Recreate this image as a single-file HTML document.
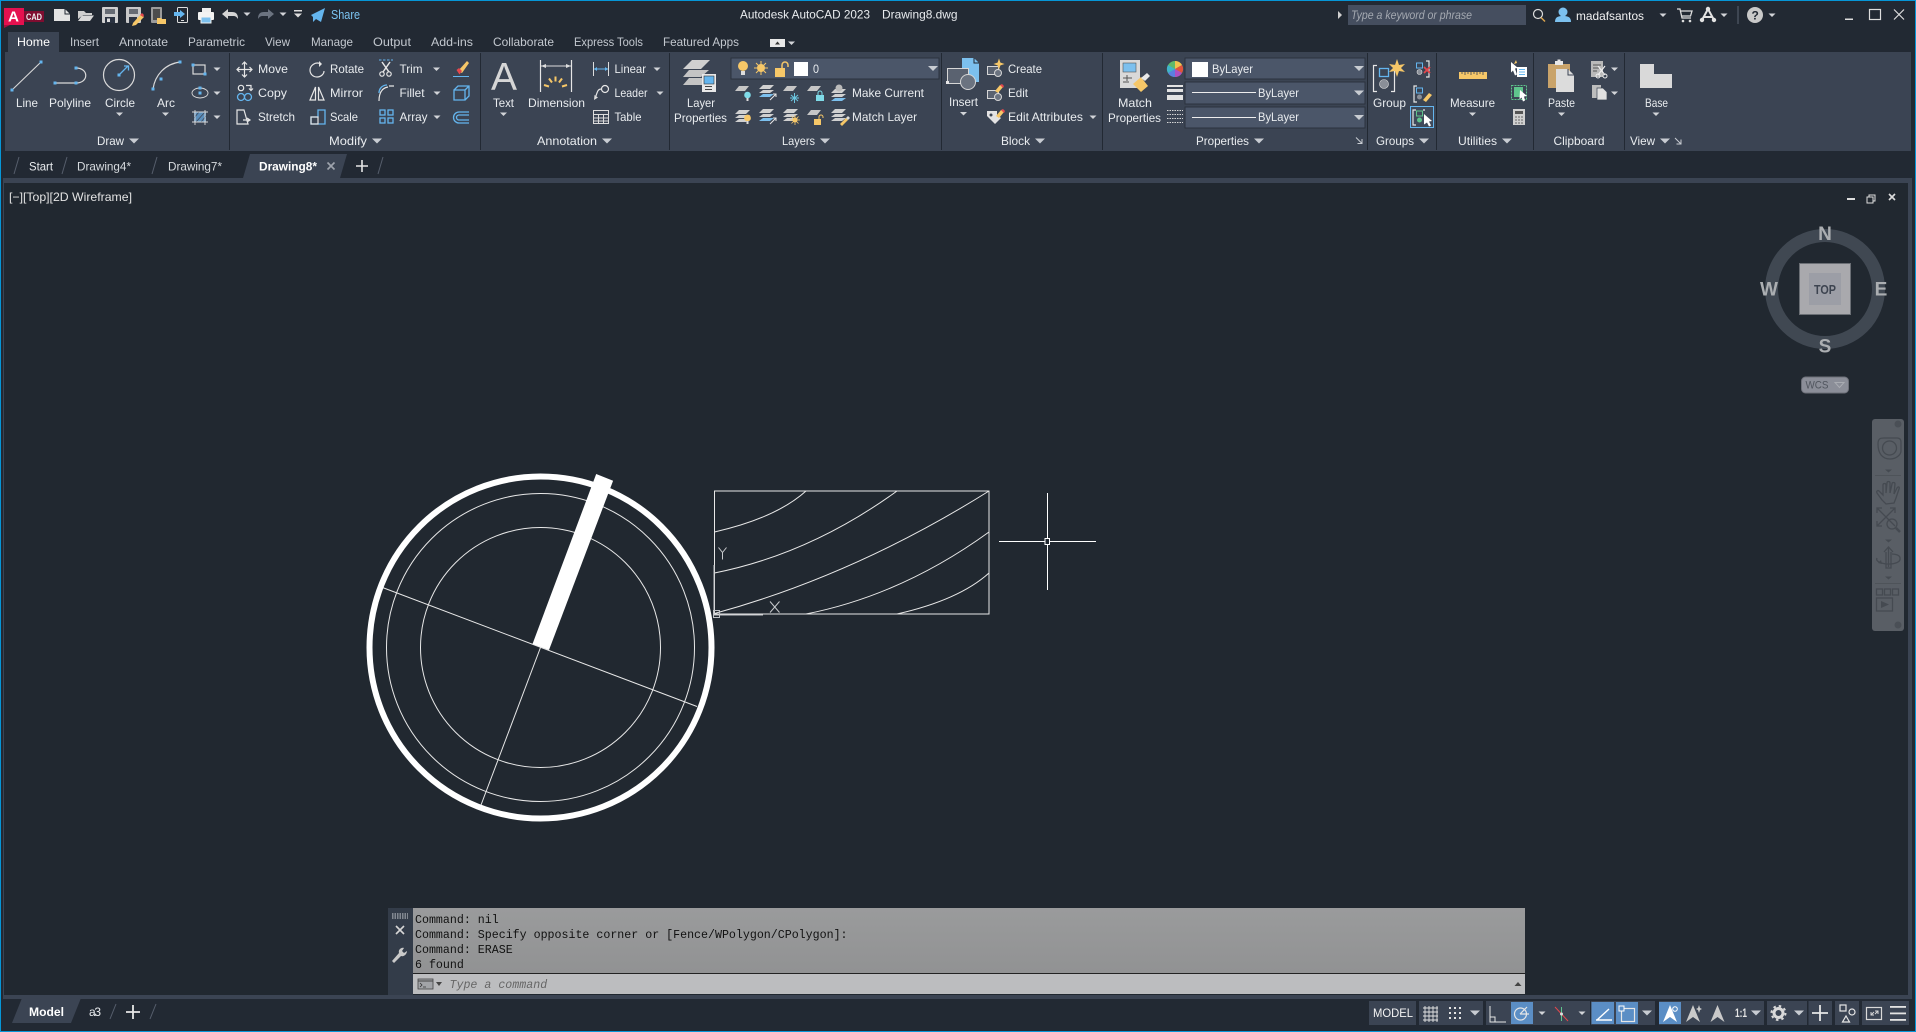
<!DOCTYPE html>
<html><head><meta charset="utf-8"><title>Autodesk AutoCAD 2023</title>
<style>
html,body{margin:0;padding:0;background:#222933;overflow:hidden}
svg{display:block;position:absolute;left:0;top:0}
text{font-family:"Liberation Sans",sans-serif;font-size:12px;fill:#e9ecef;white-space:pre}
.m{font-family:"Liberation Mono",monospace;font-size:11.63px;fill:#111}
.d{fill:#c3c8cf}
.b{font-weight:bold;fill:#fff}
.s{fill:none;stroke:#d9d9d9;stroke-width:1.2}
.w{fill:none;stroke:#e6e6e6;stroke-width:1.2}
.bl{fill:none;stroke:#64b5ee;stroke-width:1.3}
.g{fill:#d9d9d9}.y{fill:#f6c768}.c{fill:#64b5ee}
.nv{fill:none;stroke:#454a51;stroke-width:1.3}
</style></head><body>
<svg width="1916" height="1032" viewBox="0 0 1916 1032" xmlns="http://www.w3.org/2000/svg">
<defs>
<path id="k" d="M-3.5-1.5h7L0 2z" fill="#d2d4d8"/>
<path id="K" d="M-5-2.5H5L0 2.5z" fill="#c8ccd2"/>
<rect id="p" x="-1.5" y="-1.5" width="3" height="3" fill="#64b5ee"/>
<path id="lp" d="M0 5l4-5h10l-4 5z" fill="#c6c6c6"/>
<g id="st"><path d="M0 4l4-4h11l-4 4z" fill="#d0d0d0"/><path d="M0 8l4-3h11l-4 3z" fill="#d0d0d0"/><path d="M0 12l4-3h11l-4 3z" fill="#d0d0d0"/></g>
<g id="bst"><path d="M0 4l4-4h11l-4 4z" fill="#d0d0d0"/><path d="M0 8l4-3h11l-4 3z" fill="#d0d0d0"/><path d="M0 12l4-3h11l-4 3z" fill="#7cc0ee"/></g>
</defs>
<rect width="1916" height="1032" fill="#222933"/>
<rect width="1916" height="1" fill="#0696d7"/><rect y="1031" width="1916" height="1" fill="#0696d7"/>
<rect width="1" height="1032" fill="#0696d7"/><rect x="1915" width="1" height="1032" fill="#0696d7"/>

<!-- ribbon & viewport frames -->
<rect x="5" y="52" width="1906" height="99" fill="#3b4453"/>
<rect x="8" y="32" width="51" height="20" fill="#3b4453"/>
<rect x="3" y="178" width="1909" height="5" fill="#3b4453"/>
<rect x="1908" y="178" width="4" height="821" fill="#3b4453"/>
<rect x="3" y="178" width="1" height="821" fill="#3b4453"/>
<rect x="3" y="995" width="1909" height="4" fill="#3b4453"/>
<rect x="4" y="183" width="1904" height="812" fill="#212830"/>
<g fill="#222933"><rect x="229" y="53" width="1" height="97"/><rect x="480" y="53" width="1" height="97"/><rect x="669" y="53" width="1" height="97"/><rect x="941" y="53" width="1" height="97"/><rect x="1102" y="53" width="1" height="97"/><rect x="1367" y="53" width="1" height="97"/><rect x="1436" y="53" width="1" height="97"/><rect x="1533" y="53" width="1" height="97"/><rect x="1624" y="53" width="1" height="97"/></g>

<!-- quick access -->
<rect x="4" y="8" width="20" height="17" fill="#e5114f"/><path d="M4 25v3l6-3z" fill="#a80f3c"/>
<rect x="24" y="11" width="20" height="11" fill="#7f0d30"/>
<text x="8" y="21.5" textLength="11" lengthAdjust="spacingAndGlyphs" style="font-size:15px;font-weight:bold;fill:#fff">A</text>
<text x="26" y="20" textLength="16" lengthAdjust="spacingAndGlyphs" style="font-size:9px;font-weight:bold;fill:#eee">CAD</text>
<path d="M54 9h11l5 5v7H54z" fill="#e3e3e3"/><path d="M65 9v5h5" fill="none" stroke="#222933"/>
<path d="M78 19V11h6l2 2h6v2H83z" fill="#cfcfcf"/><path d="M82 15.5h12l-4 5.5H78z" fill="#d9d9d9"/>
<rect x="102" y="7" width="16" height="16" rx="1" fill="#cfcfcf"/><rect x="105" y="9" width="10" height="5" fill="#666b73"/><rect x="105" y="17" width="10" height="6" fill="#2a3240"/><rect x="107" y="18.500" width="3" height="3.500" fill="#ddd"/>
<rect x="126" y="7" width="15" height="16" rx="1" fill="#c8c8c8"/><rect x="129" y="9" width="9" height="5" fill="#666b73"/><rect x="129" y="17" width="8" height="6" fill="#2a3240"/><path d="M133 23l8-9 3 3-8 8-4 1z" fill="#f6c768"/><path d="M140 15l2-2 2 2-1 2z" fill="#e5484d"/>
<rect x="151" y="7" width="11" height="16" rx="1" fill="#9b9b9b"/><rect x="153" y="9" width="7" height="11" fill="#4c4c4c"/><path d="M157 18h4l1 1h4v5h-9z" fill="#f6c768"/>
<rect x="177.500" y="7.500" width="10" height="15" rx="1" fill="none" stroke="#ddd"/><path d="M174 12h6v-2l5 4-5 4v-2h-6z" fill="#64b5ee"/><rect x="181" y="20" width="3" height="1" fill="#ddd"/>
<rect x="202" y="8" width="9" height="5" fill="#eee"/><rect x="198" y="12" width="16" height="8" rx="1" fill="#f2f2f2"/><rect x="201" y="17" width="10" height="6" fill="#7cc0ee" stroke="#f2f2f2"/>
<path d="M222 14l6-5v3h4c4 0 6 2 6 7-2-3-3-3-6-3h-4v3z" fill="#d5d5d5"/><use href="#k" x="247" y="14"/>
<path d="M274 14l-6-5v3h-4c-4 0-6 2-6 7 2-3 3-3 6-3h4v3z" fill="#6b7380"/><use href="#k" x="283" y="14"/>
<rect x="294" y="10" width="8" height="1.500" fill="#ddd"/><path d="M294 13.500h8l-4 4z" fill="#ddd"/>
<path d="M311 15l14-7-4 14-5-3-3 3v-5z" fill="#64b5ee"/>
<text x="331" y="19" textLength="29" lengthAdjust="spacingAndGlyphs" style="fill:#7cc4f2;font-size:13px">Share</text>

<!-- title -->
<text x="740" y="18.500" textLength="130" lengthAdjust="spacingAndGlyphs">Autodesk AutoCAD 2023</text>
<text x="882" y="18.500" textLength="75.500" lengthAdjust="spacingAndGlyphs">Drawing8.dwg</text>
<path d="M1338 11l4 4-4 4z" fill="#cfcfcf"/>
<rect x="1348" y="5" width="178" height="20" fill="#454e5f"/>
<text x="1351" y="19" textLength="121" lengthAdjust="spacingAndGlyphs" style="font-style:italic;font-size:11.500px;fill:#a4a9b1">Type a keyword or phrase</text>
<circle cx="1538" cy="14" r="4.500" fill="none" stroke="#ddd" stroke-width="1.200"/><path d="M1541 17.500l4 4" stroke="#d9a34e" stroke-width="1.500"/>
<circle cx="1563" cy="12" r="4.500" fill="#7cc0ee"/><path d="M1555 22c0-5 3-6 8-6s8 1 8 6z" fill="#7cc0ee"/>
<text x="1576" y="20" textLength="68" lengthAdjust="spacingAndGlyphs" style="fill:#f2f2f2">madafsantos</text>
<use href="#k" x="1663" y="15"/>
<path d="M1677 9h3l2 9h9M1681 11h11l-1.500 5h-8.500" fill="none" stroke="#ddd" stroke-width="1.300"/><circle cx="1683" cy="21" r="1.300" fill="#ddd"/><circle cx="1690" cy="21" r="1.300" fill="#ddd"/>
<path d="M1708 9l-6 11M1708 9l6 11M1704 17h8" stroke="#e3e3e3" stroke-width="2" fill="none"/><circle cx="1708" cy="9" r="2.200" fill="#e3e3e3"/><circle cx="1702" cy="20" r="2.200" fill="#e3e3e3"/><circle cx="1714" cy="20" r="2.200" fill="#e3e3e3"/>
<use href="#k" x="1724" y="15"/>
<rect x="1737.500" y="6" width="1" height="18" fill="#5a6270"/>
<circle cx="1755" cy="15" r="8" fill="#c9c9c9"/><text x="1751.500" y="19.500" style="font-size:12px;font-weight:bold;fill:#222933">?</text>
<use href="#k" x="1772" y="15"/>
<rect x="1845" y="18.500" width="8" height="1.500" fill="#ddd"/>
<rect x="1869.500" y="9.500" width="11" height="10" fill="none" stroke="#ddd" stroke-width="1.200"/>
<path d="M1894 9.500l10 10M1904 9.500l-10 10" stroke="#ddd" stroke-width="1.200"/>

<!-- ribbon tabs -->
<g>
<text x="17" y="46" textLength="33" lengthAdjust="spacingAndGlyphs" style="fill:#fff">Home</text>
<g style="fill:#bdc2c9">
<text class="d" x="70" y="46" textLength="29" lengthAdjust="spacingAndGlyphs">Insert</text>
<text class="d" x="119" y="46" textLength="49" lengthAdjust="spacingAndGlyphs">Annotate</text>
<text class="d" x="188" y="46" textLength="57" lengthAdjust="spacingAndGlyphs">Parametric</text>
<text class="d" x="265" y="46" textLength="25" lengthAdjust="spacingAndGlyphs">View</text>
<text class="d" x="311" y="46" textLength="42" lengthAdjust="spacingAndGlyphs">Manage</text>
<text class="d" x="373" y="46" textLength="38" lengthAdjust="spacingAndGlyphs">Output</text>
<text class="d" x="431" y="46" textLength="42" lengthAdjust="spacingAndGlyphs">Add-ins</text>
<text class="d" x="493" y="46" textLength="61" lengthAdjust="spacingAndGlyphs">Collaborate</text>
<text class="d" x="574" y="46" textLength="69" lengthAdjust="spacingAndGlyphs">Express Tools</text>
<text class="d" x="663" y="46" textLength="76" lengthAdjust="spacingAndGlyphs">Featured Apps</text>
</g>
<rect x="770" y="39" width="15" height="8" fill="#e8e8e8"/><path d="M775 44.500h5l-2.500-3z" fill="#333"/><use href="#k" x="791.500" y="43"/>
</g>

<!-- Draw -->
<path d="M12 90L41 62" stroke="#d9d9d9" stroke-width="1.100"/><use href="#p" x="12" y="90"/><use href="#p" x="41" y="62"/>
<path d="M55 83h21c13 0 13-15 0-15" class="s"/><use href="#p" x="55" y="83"/><use href="#p" x="76" y="83"/><use href="#p" x="76" y="68"/>
<circle cx="119" cy="75" r="15.500" class="s"/><path d="M119 75l9-9M124 66h4.500v4.500" class="bl"/><use href="#p" x="119" y="75"/>
<path d="M153 89C155 75 165 64 180 62" class="s"/><use href="#p" x="153" y="89"/><use href="#p" x="161" y="79"/><use href="#p" x="180" y="62"/>
<text x="16" y="107" textLength="22" lengthAdjust="spacingAndGlyphs">Line</text>
<text x="49" y="107" textLength="42" lengthAdjust="spacingAndGlyphs">Polyline</text>
<text x="105" y="107" textLength="30" lengthAdjust="spacingAndGlyphs">Circle</text>
<text x="157" y="107" textLength="18" lengthAdjust="spacingAndGlyphs">Arc</text>
<use href="#k" x="119.500" y="114"/><use href="#k" x="165.500" y="114"/>
<rect x="193" y="65" width="12" height="9" class="s" stroke-width="1"/><use href="#p" x="193" y="65"/><use href="#p" x="205" y="74"/><use href="#k" x="217" y="69"/>
<ellipse cx="200" cy="93" rx="8" ry="5" fill="none" stroke="#d9d9d9" stroke-width=".9"/><use href="#p" x="200" y="93"/><use href="#p" x="200" y="88"/><use href="#k" x="217" y="93"/>
<rect x="194" y="112" width="12" height="10" fill="#5c8fbc"/><path d="M194 118l5-6M196 122l9-10M201 122l5-6" stroke="#3b4453" stroke-width=".7"/><path d="M192 112h16M192 122h16M195 110v15M205 110v15" fill="none" stroke="#d9d9d9" stroke-width=".9"/><use href="#k" x="217" y="117"/>
<text x="97" y="145" textLength="27" lengthAdjust="spacingAndGlyphs">Draw</text><use href="#K" x="134" y="141"/>

<!-- Modify -->
<path d="M244.500 62v15M237 69.500h15M242 64.500l2.500-2.500 2.500 2.500M242 74.500l2.500 2.500 2.500-2.500M239.500 67l-2.500 2.500 2.500 2.500M249.500 67l2.500 2.500-2.500 2.500" class="w" stroke-width="1.500"/>
<circle cx="241" cy="88" r="2.700" class="w"/><path d="M246 85.500h5v4M249 88.500l2 2 2-2" class="w"/><circle cx="241" cy="97" r="3.500" class="bl"/><circle cx="248" cy="97" r="3.500" class="bl"/>
<path d="M237 110h7l4 14h-11z" class="w"/><path d="M243 120h6M247 118l3 2-3 2" class="w"/>
<path d="M321 64c-6-3-11 2-11 6 0 4 3 7 7 7s7-3 7-6" class="w"/><path d="M319 61l3 3-3 3z" fill="#e6e6e6"/>
<path d="M310 100l5.500-13v13zM324 100l-5.500-13v13z" class="w" fill="none"/>
<path d="M318 110h7v14h-14v-7h7z" class="bl" fill="none"/><rect x="311" y="117" width="7" height="7" class="w"/>
<path d="M379 60h14" stroke="#64b5ee" stroke-dasharray="2.500 1.500"/><path d="M382 62l7 10M390 62l-7 10" stroke="#e6e6e6" stroke-width="1.500"/><circle cx="382" cy="74" r="2.200" class="w"/><circle cx="389" cy="74" r="2.200" class="w"/>
<path d="M379 101c0-8 3-13 9-14M389 86h5" class="w"/><path d="M379 93c0-4 3-8 8-8" class="bl" stroke="#64b5ee"/>
<g class="bl"><rect x="380" y="110" width="5" height="5"/><rect x="388" y="110" width="5" height="5"/><rect x="380" y="118" width="5" height="5"/><rect x="388" y="118" width="5" height="5"/></g>
<path d="M458 71l9-10 2 2-7 10z" fill="#f6c768"/><path d="M456.500 70l2.500-2 3 3-2.500 3.500z" fill="#e5484d"/><path d="M453 76.500h16" stroke="#64b5ee"/>
<path d="M454 90h11v10h-11zM454 90l4-4h11v10l-4 4M465 90l4-4" class="bl"/>
<path d="M469 112h-10a5 5 0 0 0 0 11h10M469 115h-10a2.500 2.500 0 0 0 0 5h10" class="bl"/>
<text x="258" y="73" textLength="30" lengthAdjust="spacingAndGlyphs">Move</text>
<text x="258" y="97" textLength="29" lengthAdjust="spacingAndGlyphs">Copy</text>
<text x="258" y="121" textLength="37" lengthAdjust="spacingAndGlyphs">Stretch</text>
<text x="330" y="73" textLength="34" lengthAdjust="spacingAndGlyphs">Rotate</text>
<text x="330" y="97" textLength="33" lengthAdjust="spacingAndGlyphs">Mirror</text>
<text x="330" y="121" textLength="28" lengthAdjust="spacingAndGlyphs">Scale</text>
<text x="399.500" y="73" textLength="23" lengthAdjust="spacingAndGlyphs">Trim</text>
<text x="399.500" y="97" textLength="25" lengthAdjust="spacingAndGlyphs">Fillet</text>
<text x="399.500" y="121" textLength="28" lengthAdjust="spacingAndGlyphs">Array</text>
<use href="#k" x="436.500" y="69"/><use href="#k" x="437" y="93"/><use href="#k" x="437" y="117"/>
<text x="329" y="145" textLength="38" lengthAdjust="spacingAndGlyphs">Modify</text><use href="#K" x="377" y="141"/>

<!-- Annotation -->
<text x="491" y="90" style="font-size:39px;fill:#d6d6d6">A</text>
<text x="493" y="107" textLength="21" lengthAdjust="spacingAndGlyphs">Text</text><use href="#k" x="503.500" y="114"/>
<path d="M540.500 60v32M571.500 60v32" class="w" stroke="#ddd"/><path d="M541 66h30" stroke="#ddd"/><path d="M541 66l5-2v4zM571 66l-5-2v4z" fill="#ddd"/>
<path d="M555.500 76.500v5M549 78.500l3 4M562 78.500l-3 4M544 85l5 1.500M567 85l-5 1.500" stroke="#f6c768" stroke-width="2"/>
<text x="528" y="107" textLength="57" lengthAdjust="spacingAndGlyphs">Dimension</text>
<path d="M593.500 62v14M608.500 62v14" stroke="#ddd"/><path d="M594 69h14" stroke="#64b5ee"/><path d="M594 69l3-2v4zM608 69l-3-2v4z" fill="#64b5ee"/>
<circle cx="605" cy="89" r="3.500" class="w"/><path d="M601.500 89c-4 0-4 3-6 8" class="w"/><path d="M594 100l.5-5 3.500 2.500z" fill="#ddd"/>
<g fill="none" stroke="#ddd"><rect x="593.500" y="110.500" width="15" height="13"/><path d="M593 114.500h16M593 118h16M593 121h16M598.500 114v10M603.500 114v10"/></g>
<text x="614.500" y="73" textLength="31.500" lengthAdjust="spacingAndGlyphs">Linear</text>
<text x="614.500" y="97" textLength="33" lengthAdjust="spacingAndGlyphs">Leader</text>
<text x="614.500" y="121" textLength="27" lengthAdjust="spacingAndGlyphs">Table</text>
<use href="#k" x="657" y="69"/><use href="#k" x="660" y="93"/>
<text x="537" y="145" textLength="60" lengthAdjust="spacingAndGlyphs">Annotation</text><use href="#K" x="607" y="141"/>

<!-- Layers -->
<g transform="translate(683,60)"><path d="M0 9l9-9h18l-9 9z" fill="#d0d0d0"/><path d="M0 17l6-7h20l-8 7z" fill="#c4c4c4"/><path d="M0 25l6-7h16v7z" fill="#c4c4c4"/></g>
<rect x="702" y="74" width="14" height="18" fill="#e8e8e8"/><rect x="704" y="76" width="10" height="8" fill="#64b5ee" stroke="#333" stroke-width=".6"/><path d="M705 86.500h7M705 89.500h7" stroke="#444"/>
<text x="687" y="107" textLength="28" lengthAdjust="spacingAndGlyphs">Layer</text>
<text x="674" y="122" textLength="53" lengthAdjust="spacingAndGlyphs">Properties</text>
<rect x="731" y="58" width="208" height="21" fill="#4b5669" stroke="#2b323e"/>
<circle cx="743" cy="66" r="5" class="y"/><rect x="741" y="71" width="4" height="4" fill="#ddd"/>
<circle cx="761" cy="68" r="4" class="y"/><path d="M761 61v14M754 68h14M756 63l10 10M766 63l-10 10" stroke="#f6c768"/>
<rect x="775" y="68" width="10" height="9" class="y"/><path d="M782 68v-3a3 3 0 0 1 6 0v2" fill="none" stroke="#f6c768" stroke-width="1.500"/>
<rect x="794" y="62" width="14" height="14" fill="#fff"/>
<text x="813" y="73" textLength="6" lengthAdjust="spacingAndGlyphs">0</text>
<use href="#K" x="933" y="68.500"/>
<use href="#lp" x="735" y="86"/><circle cx="747.500" cy="95" r="3.300" fill="#7fdbe8"/><rect x="746.500" y="98" width="2" height="3" fill="#ddd"/>
<use href="#bst" x="759" y="85"/><path d="M770 100l6-6M773 94h3v3" stroke="#e6e6e6" fill="none"/>
<use href="#lp" x="783" y="86"/><path d="M794.500 93v10M790 98h9M791 95l7 6M798 95l-7 6" stroke="#6cc6e0"/>
<use href="#lp" x="807" y="86"/><rect x="816" y="95" width="8" height="6" fill="#7fdbe8"/><path d="M818 95v-2a2 2 0 0 1 4 0v2" fill="none" stroke="#7fdbe8"/>
<use href="#bst" x="831" y="89"/><circle cx="839" cy="88" r="3.500" fill="#bbb"/>
<use href="#st" x="735" y="110"/><circle cx="747.500" cy="118" r="3.400" class="y"/><rect x="746.500" y="121" width="2" height="3" fill="#ddd"/>
<use href="#bst" x="759" y="109"/><path d="M770 124l6-6M773 118h3v3" stroke="#e6e6e6" fill="none"/>
<use href="#st" x="783" y="109"/><circle cx="795" cy="120" r="2.500" class="y"/><path d="M795 115v10M790 120h10M791.500 116.500l7 7M798.500 116.500l-7 7" stroke="#f6c768" stroke-width=".8"/>
<use href="#lp" x="807" y="110"/><rect x="814" y="119" width="7" height="6" class="y"/><path d="M819 119v-2a2 2 0 0 1 4 0v1" fill="none" stroke="#f6c768"/>
<use href="#st" x="831" y="109"/><path d="M840 124l6-6 2 2-6 6z" class="y"/><path d="M846 118l2-2 2 2-2 2z" fill="#ddd"/>
<text x="852" y="97" textLength="72" lengthAdjust="spacingAndGlyphs">Make Current</text>
<text x="852" y="121" textLength="65" lengthAdjust="spacingAndGlyphs">Match Layer</text>
<text x="782" y="145" textLength="33" lengthAdjust="spacingAndGlyphs">Layers</text><use href="#K" x="825" y="141"/>

<!-- Block -->
<path d="M962 58h12l5 5v19h-17z" fill="#7cc0ee"/><path d="M974 58v5h5" fill="none" stroke="#222933"/>
<rect x="947.500" y="68.500" width="21" height="15" fill="#5a6270" stroke="#d6d6d6"/><rect x="946" y="81" width="3" height="3" fill="#e6e6e6"/>
<circle cx="968" cy="82" r="7.500" fill="#6b7380" stroke="#d6d6d6"/>
<text x="949" y="106" textLength="29" lengthAdjust="spacingAndGlyphs">Insert</text><use href="#k" x="963.500" y="113.500"/>
<rect x="987.500" y="66.500" width="11" height="8" fill="#5a6270" stroke="#d6d6d6"/><circle cx="998" cy="73" r="3.500" fill="#6b7380" stroke="#d6d6d6"/><path d="M999 60l1 3 3 1-3 1-1 3-1-3-3-1 3-1z" class="y" stroke="#f6c768"/>
<rect x="987.500" y="90.500" width="11" height="8" fill="#5a6270" stroke="#d6d6d6"/><circle cx="998" cy="97" r="3.500" fill="#6b7380" stroke="#d6d6d6"/><path d="M995 91l5-6 3 2-5 6z" class="y"/><path d="M1000 85l2-1 2 2-1 2z" fill="#e5484d"/>
<path d="M987 111h10v4l4 3-6 6-8-8z" fill="#e3e3e3"/><circle cx="991" cy="115" r="1.500" fill="#3b4453"/><path d="M996 116l5-6 3 2-5 6z" class="y"/><path d="M1001 110l2-1 2 2-1 2z" fill="#e5484d"/>
<text x="1008" y="73" textLength="34" lengthAdjust="spacingAndGlyphs">Create</text>
<text x="1008" y="97" textLength="20" lengthAdjust="spacingAndGlyphs">Edit</text>
<text x="1008" y="121" textLength="75" lengthAdjust="spacingAndGlyphs">Edit Attributes</text><use href="#k" x="1093" y="117"/>
<text x="1001" y="145" textLength="29" lengthAdjust="spacingAndGlyphs">Block</text><use href="#K" x="1040" y="141"/>

<!-- Properties -->
<rect x="1120" y="60" width="20" height="28" fill="#d9d9d9"/><rect x="1123" y="63" width="13" height="9" fill="#7cc0ee" stroke="#555" stroke-width=".6"/><path d="M1123 78h9M1123 82h6M1127 75v6" stroke="#555"/>
<path d="M1133 84l8-7 7 9-7 6z" class="y"/><path d="M1141 78l6-5 3 3-5 5z" fill="#e8e8e8"/>
<text x="1118" y="107" textLength="34" lengthAdjust="spacingAndGlyphs">Match</text>
<text x="1108" y="122" textLength="53" lengthAdjust="spacingAndGlyphs">Properties</text>
<circle cx="1175" cy="69" r="8" fill="#5fb96a"/><path d="M1175 69V61a8 8 0 0 1 7 4z" fill="#f2c14e"/><path d="M1175 69l7-4a8 8 0 0 1 0 8z" fill="#e0533d"/><path d="M1175 69l7 4a8 8 0 0 1-7 4z" fill="#b04fc2"/><path d="M1175 69v8a8 8 0 0 1-7-4z" fill="#5b7fe0"/><path d="M1175 69l-7 4a8 8 0 0 1 0-8z" fill="#3fb4c9"/>
<g fill="#e3e3e3"><rect x="1167" y="85" width="16" height="2"/><rect x="1167" y="89" width="16" height="3"/><rect x="1167" y="95" width="16" height="5"/></g>
<path d="M1167 110.500h16M1167 114.500h16M1167 118.500h16M1167 122.500h16" stroke="#d6d6d6" stroke-dasharray="1.500 1"/>
<g fill="#4b5669" stroke="#2b323e"><rect x="1185" y="58" width="180" height="21"/><rect x="1185" y="82" width="180" height="22"/><rect x="1185" y="107" width="180" height="21"/></g>
<rect x="1192" y="62" width="16" height="15" fill="#fff"/>
<text x="1212" y="73" textLength="41" lengthAdjust="spacingAndGlyphs">ByLayer</text>
<path d="M1192 92.500h64M1192 117.500h64" stroke="#eee"/>
<text x="1258" y="97" textLength="41" lengthAdjust="spacingAndGlyphs">ByLayer</text>
<text x="1258" y="121" textLength="41" lengthAdjust="spacingAndGlyphs">ByLayer</text>
<use href="#K" x="1359" y="68.500"/><use href="#K" x="1359" y="93"/><use href="#K" x="1359" y="117.500"/>
<text x="1196" y="145" textLength="53" lengthAdjust="spacingAndGlyphs">Properties</text><use href="#K" x="1259" y="141"/>
<path d="M1356 137.500l6 6M1362 139v4.500h-4.500" stroke="#c8ccd2" fill="none"/>

<!-- Groups -->
<path d="M1377 65.500h-3.500v26h3.500M1391 65.500h3.500v26H1391" class="w"/>
<rect x="1379.500" y="68.500" width="9" height="8" fill="none" stroke="#64b5ee" stroke-width="1.300"/><circle cx="1384" cy="84" r="4.500" fill="#8a8f98" stroke="#ddd" stroke-width=".6"/>
<path d="M1397 59l2 6 6-1-4 4 4 4-6-1-2 6-2-6-6 1 4-4-4-4 6 1z" class="y"/>
<text x="1373" y="107" textLength="33" lengthAdjust="spacingAndGlyphs">Group</text>
<rect x="1416.500" y="63" width="6" height="5" fill="none" stroke="#64b5ee"/><circle cx="1419.500" cy="72" r="2.500" fill="#8a8f98" stroke="#ddd" stroke-width=".6"/><path d="M1426 61h3v16h-3" class="w" stroke-width="1"/><path d="M1424 67l6 6M1430 67l-6 6" stroke="#e5484d" stroke-width="1.800"/>
<path d="M1417 86h-3v16h3" class="w" stroke-width="1"/><rect x="1416.500" y="88" width="6" height="5" fill="none" stroke="#64b5ee"/><circle cx="1419.500" cy="97" r="2.500" fill="#8a8f98"/><path d="M1423 100l6-7 3 2-6 7z" class="y"/>
<rect x="1410.500" y="106.500" width="23" height="21" fill="#3f4a5b" stroke="#64b5ee"/>
<path d="M1416 110h-3v15h3M1423 110h2" class="w" stroke-width="1"/><rect x="1416.500" y="111" width="6" height="5" fill="none" stroke="#5fc48c"/><circle cx="1419.500" cy="120" r="2.500" fill="#5fc48c"/>
<path d="M1424 114l8 7-3 .5 2 4-2 1-2-4-3 2z" fill="#fff"/>
<text x="1376" y="145" textLength="38" lengthAdjust="spacingAndGlyphs">Groups</text><use href="#K" x="1424" y="141"/>

<!-- Utilities -->
<rect x="1459" y="72" width="28" height="7" class="y"/><path d="M1462 72v2M1465 72v3M1468 72v2M1471 72v3M1474 72v2M1477 72v3M1480 72v2M1483 72v3" stroke="#3b4453" stroke-width=".8"/>
<text x="1450" y="107" textLength="45" lengthAdjust="spacingAndGlyphs">Measure</text><use href="#k" x="1472.500" y="114"/>
<path d="M1511 62l7 6-3 .5 2 6-2 1-2-5-2 2z" fill="#fff"/><rect x="1517" y="67" width="10" height="10" fill="#fff"/><path d="M1519 69.500h6M1519 72h6M1519 74.500h6" stroke="#64b5ee"/><path d="M1516 60l-2 4 3-1z" class="y"/>
<rect x="1511.500" y="85.500" width="15" height="14" fill="none" stroke="#5fc48c" stroke-dasharray="2 1"/><rect x="1514" y="87" width="9" height="10" fill="#5fc48c"/><path d="M1520 90l7 6-3 .5 1 4-2 1-1.500-4-2 2z" fill="#fff"/>
<rect x="1513" y="109" width="12" height="16" fill="#d0d0d0"/><rect x="1515" y="111" width="8" height="3" fill="#555"/><path d="M1515 117h8M1515 120h8M1515 123h8" stroke="#666" stroke-dasharray="2 1"/>
<text x="1458" y="145" textLength="39" lengthAdjust="spacingAndGlyphs">Utilities</text><use href="#K" x="1507" y="141"/>

<!-- Clipboard -->
<rect x="1548" y="64" width="22" height="24" fill="#c9a36a"/><rect x="1555" y="61" width="8" height="4" fill="#e8e8e8"/><rect x="1557.500" y="59.500" width="3" height="3" fill="#e8e8e8"/>
<path d="M1556 69h12l6 6v17h-18z" fill="#dcdcdc"/><path d="M1568 69v6h6" fill="none" stroke="#3b4453"/>
<text x="1548" y="107" textLength="27" lengthAdjust="spacingAndGlyphs">Paste</text><use href="#k" x="1561.500" y="114"/>
<rect x="1591" y="61" width="12" height="16" fill="#b9b9b9"/><path d="M1593 65h8M1593 68h6M1593 71h4" stroke="#555"/><path d="M1598 66l7 9M1605 66l-7 9" stroke="#eee" stroke-width="1.200"/><circle cx="1598" cy="76" r="2" fill="none" stroke="#eee"/><circle cx="1605" cy="76" r="2" fill="none" stroke="#eee"/>
<rect x="1592" y="85" width="9" height="13" fill="#bdbdbd"/><path d="M1597 88h6l4 4v8h-10z" fill="#e0e0e0" stroke="#3b4453" stroke-width=".7"/>
<use href="#k" x="1614.500" y="69"/><use href="#k" x="1614.500" y="93"/>
<text x="1553.500" y="145" textLength="51" lengthAdjust="spacingAndGlyphs">Clipboard</text>

<!-- View -->
<path d="M1640 64h14v10h18v14h-32z" fill="#d9d9d9"/>
<text x="1645" y="107" textLength="23" lengthAdjust="spacingAndGlyphs">Base</text><use href="#k" x="1656" y="114"/>
<text x="1630" y="145" textLength="25" lengthAdjust="spacingAndGlyphs">View</text><use href="#K" x="1665" y="141"/>
<path d="M1675 138l6 6M1681 139.500v4.500h-4.500" stroke="#c8ccd2" fill="none"/>

<!-- file tabs -->
<path d="M243 178l7-24h97l-7 24z" fill="#3b4453"/>
<path d="M14 174l5-17M62 174l5-17M152 174l5-17M378 174l5-17" stroke="#565e6c"/>
<text x="29" y="170.500" textLength="24" lengthAdjust="spacingAndGlyphs">Start</text>
<text x="77" y="170.500" textLength="54" lengthAdjust="spacingAndGlyphs" style="fill:#d6dade">Drawing4*</text>
<text x="168" y="170.500" textLength="54" lengthAdjust="spacingAndGlyphs" style="fill:#d6dade">Drawing7*</text>
<text class="b" x="259" y="170.500" textLength="58" lengthAdjust="spacingAndGlyphs">Drawing8*</text>
<path d="M327.500 162.500l7 7M334.500 162.500l-7 7" stroke="#9ea4ad" stroke-width="1.600"/>
<path d="M362 160v12M356 166h12" stroke="#e6e6e6" stroke-width="1.600"/>

<!-- viewport label & controls -->
<text x="9" y="201" textLength="123" lengthAdjust="spacingAndGlyphs" style="fill:#e3e3e3">[−][Top][2D Wireframe]</text>
<rect x="1847" y="198" width="8" height="2" fill="#ddd"/>
<rect x="1869" y="195" width="6" height="6" fill="none" stroke="#ddd"/><rect x="1867" y="197" width="6" height="6" fill="#212830" stroke="#ddd"/>
<path d="M1889 194l6 6M1895 194l-6 6" stroke="#ddd" stroke-width="1.600"/>

<!-- drawing -->
<g fill="none" stroke="#e8e8e8" stroke-width="1">
<circle cx="540.500" cy="647.500" r="154"/><circle cx="540.500" cy="647.500" r="120"/>
<path d="M382.500 587.500L697 706.500"/><path d="M540.500 647.500L481 805"/>
<rect x="714.500" y="491" width="274.500" height="123"/>
<path d="M714.500 532Q776 518 806 491"/><path d="M714.500 573Q810 554 897 491"/><path d="M714.500 613.500Q855 575 989 491"/><path d="M806 614Q902 595 989 532"/><path d="M897 614Q959 600 989 573"/>
</g>
<circle cx="540.500" cy="647.500" r="171" fill="none" stroke="#fff" stroke-width="6"/>
<path d="M596.200 474l16.900 6.700L549 650l-16.500-6z" fill="#fff"/>
<path d="M714 565v49M714 615h49" stroke="#bfc2c6"/>
<rect x="713.500" y="610.500" width="6" height="7" fill="none" stroke="#bfc2c6"/>
<path d="M718.500 547.500l4 5 4-5M722.500 552.500v7" fill="none" stroke="#c8cacd"/>
<path d="M770 601.500l9.500 11M779.500 601.500l-9.500 11" stroke="#c8cacd"/>
<path d="M999 541.500h97M1047.500 493v97" stroke="#fff"/>
<rect x="1045" y="538.500" width="4.500" height="6" fill="#212830" stroke="#fff"/>

<!-- viewcube -->
<circle cx="1825" cy="289" r="53.500" fill="none" stroke="#404852" stroke-width="13"/>
<rect x="1799.500" y="263.500" width="51" height="51" fill="#a9a9ad" stroke="#6b6f75"/>
<rect x="1809" y="273" width="32" height="32" fill="#9c9ea6"/>
<text x="1825" y="294" text-anchor="middle" textLength="22" lengthAdjust="spacingAndGlyphs" style="font-size:13px;font-weight:bold;fill:#3d4450">TOP</text>
<g style="font-size:18px">
<text x="1825" y="240" text-anchor="middle" style="font-size:19px;font-weight:bold;fill:#abaeb1">N</text>
<text x="1825" y="352.500" text-anchor="middle" style="font-size:19px;font-weight:bold;fill:#abaeb1">S</text>
<text x="1769" y="295.500" text-anchor="middle" style="font-size:19px;font-weight:bold;fill:#abaeb1">W</text>
<text x="1881" y="295.500" text-anchor="middle" style="font-size:19px;font-weight:bold;fill:#abaeb1">E</text>
</g>
<rect x="1801.500" y="377" width="47" height="16" rx="4" fill="#8b8e98" stroke="#6d7079"/>
<text x="1805.500" y="388.500" textLength="23" lengthAdjust="spacingAndGlyphs" style="font-size:11px;fill:#50555e">WCS</text>
<path d="M1835 382.500h9l-4.500 5z" fill="none" stroke="#a9acb2"/>

<!-- nav bar -->
<rect x="1872" y="419" width="32" height="212" rx="3" fill="#595e65"/>
<circle cx="1898" cy="424" r="3.500" fill="#4a4f56"/>
<g class="nv"><path d="M1878 444c0-6 3-6 6-6h13q4 0 4 4v9c0 3-4 8-11 8-8 0-12-6-12-15z"/><circle cx="1889.500" cy="448" r="7"/></g>
<path d="M1885 469.500h7l-3.500 3z" fill="#454a51"/><rect x="1875" y="475" width="26" height="1" fill="#4e5359"/>
<path class="nv" d="M1882 500l-5-7c-1-2 1-3 2-2l4 4 0-10c0-2 3-2 3 0l0 8 1-10c0-2 3-2 3 0l0 10 2-9c0-2 3-2 3 0l-1 10 3-6c1-2 3-1 2 1l-3 9-2 5-8 1z"/>
<path class="nv" d="M1877 508l18 18M1895 508l-18 18M1877 513v-5h5M1890 508h5v5M1877 521v5h5"/><circle cx="1892" cy="524" r="5" class="nv"/><path d="M1896 528l4 4" stroke="#454a51" stroke-width="2.500"/>
<path d="M1885 539.500h7l-3.500 3z" fill="#454a51"/>
<path class="nv" d="M1888.500 547v20M1884 552l4.500-5 4.500 5M1886 552v16h5v-16M1877 558c-2 4 6 6 12 6s12-2 11-6c0-3-5-4-8-4"/><path d="M1881 560l-3 3 4 1z" fill="#454a51"/>
<path d="M1885 576.500h7l-3.500 3z" fill="#454a51"/><rect x="1875" y="583" width="26" height="1" fill="#4e5359"/>
<g class="nv"><rect x="1876.500" y="589" width="6" height="6"/><rect x="1884.500" y="589" width="6" height="6"/><rect x="1892.500" y="589" width="6" height="6"/><rect x="1876.500" y="598" width="16" height="13"/></g><path d="M1881 601l8 3.500-8 3.500z" fill="#454a51"/>
<circle cx="1898" cy="625" r="3.500" fill="#4a4f56"/>

<!-- command line -->
<rect x="388" y="908" width="25" height="87" fill="#333c49"/>
<defs><linearGradient id="cg" x1="0" y1="0" x2="0" y2="1"><stop offset="0" stop-color="#9a9b9c"/><stop offset="1" stop-color="#919293"/></linearGradient></defs>
<rect x="413" y="908" width="1112" height="65" fill="url(#cg)"/>
<rect x="413" y="973" width="1112" height="1" fill="#222"/>
<rect x="413" y="974" width="1112" height="20" fill="#bcbdbf"/>
<path d="M392 914h16M392 916h16M392 918h16" stroke="#cfd2d6" stroke-dasharray="1.500 1" stroke-width="1"/>
<path d="M396 926l8 8M404 926l-8 8" stroke="#d6d6d6" stroke-width="1.600"/>
<path d="M392 961l7-8c-1-3 2-6 5-5l-2 3 2 2 3-2c0 3-3 6-6 5l-7 7z" fill="#c9c9c9"/>
<text class="m" x="415" y="923">Command: nil</text>
<text class="m" x="415" y="938">Command: Specify opposite corner or [Fence/WPolygon/CPolygon]:</text>
<text class="m" x="415" y="953">Command: ERASE</text>
<text class="m" x="415" y="968">6 found</text>
<rect x="418" y="979" width="15" height="10" fill="#a2a4a8" stroke="#444" stroke-width=".8"/><path d="M418 981h15" stroke="#444"/><path d="M420 983l2 2-2 2M423 987h3" stroke="#333" fill="none" stroke-width=".8"/>
<path d="M436 982h6l-3 4z" fill="#444"/>
<text class="m" x="449.500" y="988" style="font-style:italic;fill:#666">Type a command</text>
<path d="M1514.500 986h7l-3.500-4z" fill="#444"/>

<!-- layout tabs -->
<path d="M12 1023l10-25h59l-10 25z" fill="#3b4453"/>
<text class="b" x="29" y="1016" textLength="35" lengthAdjust="spacingAndGlyphs">Model</text>
<text x="89" y="1016" textLength="12">a3</text>
<path d="M110 1019l6-15M150 1019l6-15" stroke="#565e6c"/>
<path d="M133 1005v14M126 1012h14" stroke="#e6e6e6" stroke-width="1.800"/>

<!-- status bar -->
<g fill="#3b4453"><rect x="1369" y="1001" width="47" height="24"/><rect x="1419" y="1001" width="64" height="24"/><rect x="1486" y="1001" width="104" height="24"/><rect x="1591" y="1001" width="64" height="24"/><rect x="1659" y="1001" width="105" height="24"/><rect x="1767" y="1001" width="40" height="24"/><rect x="1808.500" y="1001" width="23.500" height="24"/><rect x="1835" y="1001" width="24" height="24"/><rect x="1862" y="1001" width="47" height="24"/></g>
<g fill="#5b8ec5"><rect x="1511" y="1002" width="22" height="22"/><rect x="1591.500" y="1002" width="22.500" height="22"/><rect x="1616" y="1002" width="22" height="22"/><rect x="1659" y="1002" width="22" height="22"/></g>
<text x="1373" y="1017" textLength="40" lengthAdjust="spacingAndGlyphs" style="fill:#f4f4f4">MODEL</text>
<path d="M1423 1008h15M1423 1012h15M1423 1016h15M1423 1020h15M1425 1006v16M1429 1006v16M1433 1006v16M1437 1006v16" stroke="#e3e3e3" stroke-width=".9"/>
<path d="M1449 1008h12M1449 1013h12M1449 1018h12" stroke="#e3e3e3" stroke-width="2" stroke-dasharray="2 3"/><use href="#K" x="1475" y="1013"/>
<path d="M1490 1006v16h16M1490 1017h5v5" fill="none" stroke="#e6e6e6"/>
<circle cx="1520.500" cy="1014" r="6" class="w"/><path d="M1520 1014l7-7M1520 1014h9" class="w"/><use href="#k" x="1542" y="1013"/>
<path d="M1555 1007l13 14" stroke="#e5484d"/><path d="M1561.500 1007v14" stroke="#5fc48c"/><circle cx="1561.500" cy="1014" r="1.500" fill="#ddd"/><use href="#k" x="1582" y="1013"/>
<path d="M1596 1020h16M1597 1020l12-11" stroke="#fff" stroke-width="1.400"/>
<rect x="1621.500" y="1008.500" width="13" height="13" class="w" stroke="#fff"/><rect x="1619" y="1006" width="5" height="5" fill="#5b8ec5" stroke="#fff"/><use href="#K" x="1647" y="1013"/>
<path d="M1670 1005l-7 17 7-5 7 5z" fill="#fff"/><circle cx="1675" cy="1009" r="2.300" fill="none" stroke="#fff"/>
<path d="M1693 1005l-7 17 7-5 7 5z" fill="#c9c9c9"/><path d="M1699 1005l1 3 2 1-2 1-1 3-1-3-2-1 2-1z" fill="#c9c9c9"/>
<path d="M1717.500 1005l-7 17 7-5 7 5z" fill="#c9c9c9"/>
<text x="1735" y="1017" textLength="12" lengthAdjust="spacingAndGlyphs" style="fill:#e6e6e6;font-weight:bold">1:1</text><use href="#K" x="1756" y="1013"/>
<circle cx="1778.500" cy="1013" r="4.500" fill="none" stroke="#d9d9d9" stroke-width="3"/><circle cx="1778.500" cy="1013" r="7" fill="none" stroke="#d9d9d9" stroke-width="2" stroke-dasharray="2.500 3"/><use href="#K" x="1799" y="1013"/>
<path d="M1820 1005v16M1812 1013h16" stroke="#e6e6e6" stroke-width="1.800"/>
<rect x="1840" y="1005" width="6" height="6" class="w"/><circle cx="1852" cy="1012" r="3" class="w"/><path d="M1846 1016l-3.500 6h7z" class="w"/>
<rect x="1866.500" y="1007.500" width="15" height="12" class="s" stroke-width="1"/><path d="M1871 1015l3-3M1871 1012v3h3M1878 1011l-3 3M1875 1011h3v3" stroke="#d9d9d9" fill="none"/>
<g fill="#e3e3e3"><rect x="1890" y="1006" width="16" height="1.800"/><rect x="1890" y="1012.500" width="16" height="1.800"/><rect x="1890" y="1019" width="16" height="1.800"/></g>
</svg>
</body></html>
